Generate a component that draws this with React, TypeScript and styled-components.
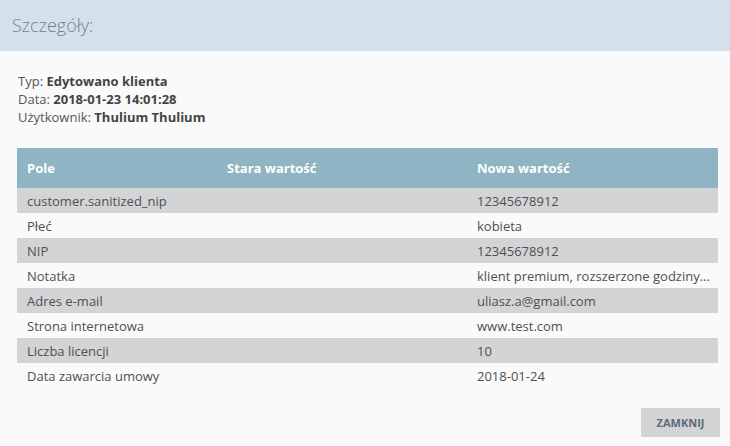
import React from "react";
import styled, { createGlobalStyle } from "styled-components";

const GlobalStyle = createGlobalStyle`
  html, body {
    margin: 0;
    padding: 0;
    background: #fafafa;
  }
  body {
    font-family: "Open Sans", "Liberation Sans", sans-serif;
    color: #555;
  }
`;

const rows: [string, string, string][] = [
  ["customer.sanitized_nip", "", "12345678912"],
  ["Płeć", "", "kobieta"],
  ["NIP", "", "12345678912"],
  ["Notatka", "", "klient premium, rozszerzone godziny..."],
  ["Adres e-mail", "", "uliasz.a@gmail.com"],
  ["Strona internetowa", "", "www.test.com"],
  ["Liczba licencji", "", "10"],
  ["Data zawarcia umowy", "", "2018-01-24"],
];

const App: React.FC = () => {
  return (
    <Modal>
      <GlobalStyle />
      <Header>
        <h4 className="title">Szczegóły:</h4>
      </Header>
      <Body>
        <Info>
          <div>
            Typ: <b>Edytowano klienta</b>
          </div>
          <div>
            Data: <b>2018-01-23 14:01:28</b>
          </div>
          <div>
            Użytkownik: <b>Thulium Thulium</b>
          </div>
        </Info>
        <Table>
          <colgroup>
            <col style={{ width: 200 }} />
            <col style={{ width: 250 }} />
            <col />
          </colgroup>
          <thead>
            <tr>
              <th>Pole</th>
              <th>Stara wartość</th>
              <th>Nowa wartość</th>
            </tr>
          </thead>
          <tbody>
            {rows.map((r, i) => (
              <Row key={i} $odd={i % 2 === 0}>
                <td>{r[0]}</td>
                <td>{r[1]}</td>
                <td>{r[2]}</td>
              </Row>
            ))}
          </tbody>
        </Table>
      </Body>
      <Footer>
        <CloseButton>Zamknij</CloseButton>
      </Footer>
    </Modal>
  );
};

const Modal = styled.div`
  width: 730px;
  height: 446px;
  background: #fafafa;
  display: flex;
  flex-direction: column;
`;

const Header = styled.div`
  height: 51px;
  background: #d3e2ea;
  display: flex;
  align-items: center;
  padding: 0 12px;
  box-sizing: border-box;
  .title {
    margin: 0;
    font-size: 18px;
    font-weight: 300;
    color: #76828b;
    line-height: 22px;
    padding-bottom: 2px;
  }
`;

const Body = styled.div`
  padding: 21px 12px 0 17px;
`;

const Info = styled.div`
  font-size: 13px;
  line-height: 18px;
  color: #555;
  padding-left: 1px;
  b {
    color: #444;
    font-weight: 700;
  }
`;

const Table = styled.table`
  margin-top: 22px;
  width: 701px;
  border-collapse: collapse;
  table-layout: fixed;
  font-size: 13px;
  th {
    height: 40px;
    background: #8fb4c3;
    color: #fff;
    font-weight: 700;
    text-align: left;
    padding: 0 10px;
  }
  td {
    height: 25px;
    padding: 0 10px;
    color: #505050;
    white-space: nowrap;
  }
  td:last-child {
    padding-right: 0;
  }
`;

const Row = styled.tr<{ $odd: boolean }>`
  background: ${(p) => (p.$odd ? "#d3d4d6" : "#fafafa")};
`;

const Footer = styled.div`
  display: flex;
  justify-content: flex-end;
  padding: 20px 10px 0 0;
`;

const CloseButton = styled.button`
  width: 79px;
  height: 29px;
  border: none;
  background: #d3d4d6;
  color: #5b6b78;
  font-family: "Open Sans", "Liberation Sans", sans-serif;
  font-size: 11px;
  font-weight: 700;
  text-transform: uppercase;
  cursor: pointer;
`;

export default App;
